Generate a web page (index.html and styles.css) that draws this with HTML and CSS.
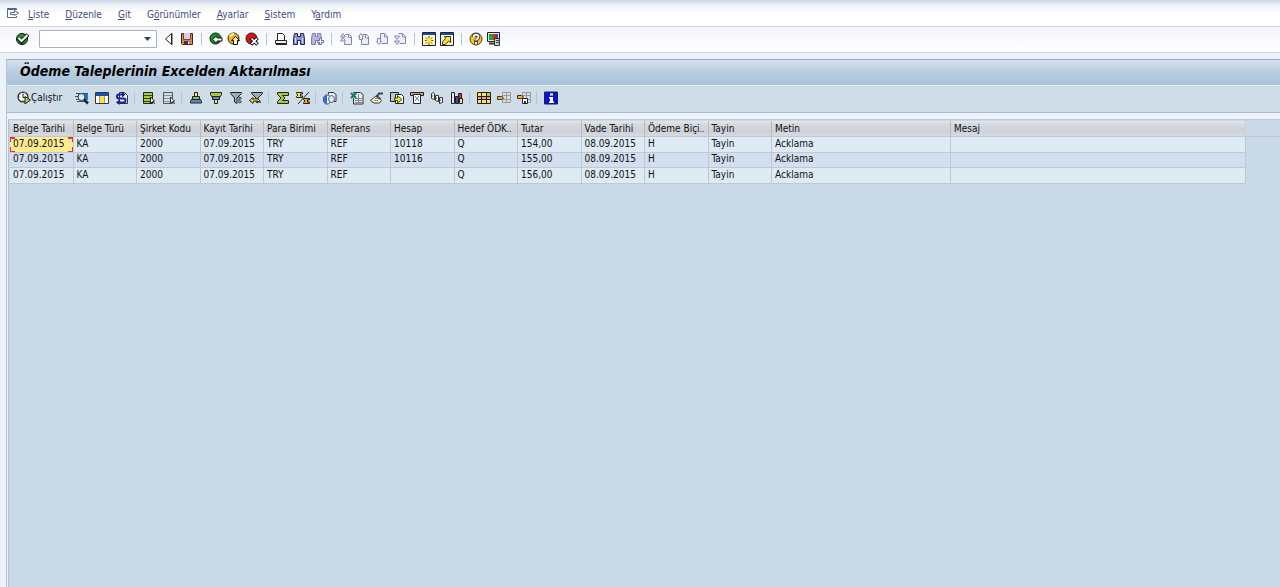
FILE: index.html
```html
<!DOCTYPE html>
<html lang="tr">
<head>
<meta charset="utf-8">
<title>Ödeme Taleplerinin Excelden Aktarılması</title>
<link rel="stylesheet" href="styles.css">
</head>
<body>
<nav class="menu">
  <button class="icon" aria-label="Menü"><svg viewBox="0 0 14 14" fill="none" stroke="#596491"><path d="M10.500 4V2.500h-9v9h9V10M1 3.500h10"/><path d="M4.500 6.500h4v-2l4 2.500-4 2.500v-1h-4z" fill="#fff"/></svg></button>
  <a href="#"><u>L</u>iste</a>
  <a href="#"><u>D</u>üzenle</a>
  <a href="#"><u>G</u>it</a>
  <a href="#">G<u>ö</u>rünümler</a>
  <a href="#"><u>A</u>yarlar</a>
  <a href="#"><u>S</u>istem</a>
  <a href="#">Y<u>a</u>rdım</a>
</nav>

<div class="toolbar">
  <button class="icon" aria-label="Giriş"><svg viewBox="0 0 14 14"><circle cx="7" cy="7" r="5.500" fill="#159c22" stroke="#111"/><path d="M3.500 6l3 3.500L13 2.500" fill="none" stroke="#111" stroke-width="4"/><path d="M3.500 6l3 3L12.500 3" fill="none" stroke="#fff" stroke-width="2"/></svg></button>
  <div class="command">
    <input type="text" aria-label="Komut alanı">
    <button class="drop" aria-label="Komut listesi"><svg viewBox="0 0 7 4"><path d="M0 0h7L3.500 4z" fill="#2b3f70"/></svg></button>
  </div>
  <div class="group">
    <button class="icon" aria-label="Önceki"><svg viewBox="0 0 14 14"><path d="M3.500 7l6-5.500v11z" fill="#fff" stroke="#222"/><path d="M10.500 1v12" stroke="#999"/></svg></button>
    <button class="icon" aria-label="Kaydet"><svg viewBox="0 0 14 14"><path d="M1.500 1.500h11v11h-10l-1-1z" fill="#d98b35" stroke="#3a2520"/><path d="M4 1h6v6H4z" fill="#dccbf0"/><path d="M3.500 1v6.500h7V1" fill="none" stroke="#6a4a3e"/><path d="M4 9h6v3.500H4z" fill="#453154"/><path d="M8 9.500h1.500V12H8z" fill="#fff"/></svg></button>
  </div>
  <div class="group split">
    <button class="icon" aria-label="Geri"><svg viewBox="0 0 14 14"><circle cx="6.500" cy="6.500" r="5.500" fill="#0b9a20" stroke="#111"/><path d="M3.500 7.500l4.500-4V6h5v3H8v2.500z" fill="#fff" stroke="#111"/></svg></button>
    <button class="icon" aria-label="Çık"><svg viewBox="0 0 14 14"><circle cx="6.500" cy="6.500" r="5.500" fill="#f2b500" stroke="#222"/><path d="M3 5a4 4 0 0 1 4-3" stroke="#fff79a" stroke-width="2" fill="none"/><path d="M8.500 4.500l4 4h-2v4h-4v-4h-2z" fill="#fff2a8" stroke="#111"/></svg></button>
    <button class="icon" aria-label="İptal"><svg viewBox="0 0 14 14"><circle cx="6.500" cy="6.500" r="5.500" fill="#dc1010" stroke="#211"/><path d="M6 6l6.500 6.500M12.500 6L6 12.500" stroke="#111" stroke-width="3.500"/><path d="M6.500 6.500l5.500 5.500M12 6.500L6.500 12" stroke="#fff" stroke-width="1.600"/></svg></button>
  </div>
  <div class="group split">
    <button class="icon" aria-label="Yazdır"><svg viewBox="0 0 14 14"><path d="M3.500 8.500v-7h5l2 2v5" fill="#fff" stroke="#222"/><path d="M1.500 8.500h11v3h-11z" fill="#eee" stroke="#222"/><path d="M2 12.500h11" stroke="#222"/></svg></button>
    <button class="icon" aria-label="Bul"><svg viewBox="0 0 14 14"><path d="M2.500 1.500h3v3h3v-3h3l1 5v6h-4v-4h-3v4h-4v-6z" fill="#8791d4" stroke="#222752"/><path d="M3.500 6v5M10.500 6v5" stroke="#d5daf8"/></svg></button>
    <button class="icon" aria-label="Sonrakini bul"><svg viewBox="0 0 14 14"><path d="M2.500 1.500h3v3h2v-3h3l1 5v6h-3v-4h-3v4h-4v-6z" fill="#b4b8e0" stroke="#7b7ea6"/><path d="M10.500 6v7M7 9.500h7" stroke="#7779a4" stroke-width="3"/><path d="M10.500 7v5M8 9.500h5" stroke="#f3f3ff"/></svg></button>
  </div>
  <div class="group split muted">
    <button class="icon" aria-label="İlk sayfa"><svg viewBox="0 0 14 14"><path d="M6.500 2.500h4l2 2v8h-7V10M9.500 3v2.500H12"/><path d="M1.500 5L4 1.500 6.500 5zM1.500 9L4 5.500 6.500 9z"/></svg></button>
    <button class="icon" aria-label="Önceki sayfa"><svg viewBox="0 0 14 14"><path d="M5.500 2.500h4l2 2v8h-7V6M8.500 3v3h3"/><path d="M1.500 4.500l2.500-3 2.500 3h-1v3h-3v-3z"/></svg></button>
    <button class="icon" aria-label="Sonraki sayfa"><svg viewBox="0 0 14 14"><path d="M5.500 7V1.500h4l3 3v7h-6M9.500 2v3h3"/><path d="M2.500 6.500h3v3h1l-2.500 3-2.500-3h1z"/></svg></button>
    <button class="icon" aria-label="Son sayfa"><svg viewBox="0 0 14 14"><path d="M5.500 1.500h4l3 3v7h-6M9.500 2v3h3"/><path d="M1.500 4L4 7.500 6.500 4zM1.500 9L4 12.500 6.500 9z"/></svg></button>
  </div>
  <div class="group split">
    <button class="icon" aria-label="Yeni oturum"><svg viewBox="0 0 14 14"><path d="M.5.5h13v13H.5z" fill="#f8f5ce" stroke="#222"/><path d="M1 1h12v2H1z" fill="#1a48a6"/><path d="M7 4v9M3 8.500h8M4 5.500l6 6M10 5.500l-6 6" stroke="#554800"/><circle cx="7" cy="8.500" r="2.500" fill="#ffe91f"/></svg></button>
    <button class="icon" aria-label="Kısayol"><svg viewBox="0 0 14 14"><path d="M.5.5h13v13H.5z" fill="#f5f4dd" stroke="#222"/><path d="M1 1h12v2H1z" fill="#1a48a6"/><path d="M2.500 12.500V10l3-3.500L4.500 4.500h6v6l-2-1.500-3 3.500z" fill="#ffe424" stroke="#333"/></svg></button>
  </div>
  <div class="group split">
    <button class="icon" aria-label="Yardım"><svg viewBox="0 0 14 14"><circle cx="7" cy="7" r="6" fill="#f5c51c" stroke="#493d21"/><path d="M4.500 5c0-3 5-3 5 0 0 2-2.500 2-2.500 4v3" stroke="#333" stroke-width="3.500" fill="none"/><path d="M4.500 5c0-3 5-3 5 0 0 2-2.500 2-2.500 3.500M7 10v2" stroke="#fff" stroke-width="1.800" fill="none"/></svg></button>
    <button class="icon" aria-label="Düzeni özelleştir"><svg viewBox="0 0 14 14"><path d="M.5.5h12v9H.5z" fill="#e8e8e8" stroke="#222"/><path d="M2 2h4v6H2z" fill="#08b22d"/><path d="M6 2h3v6H6z" fill="#e42121"/><path d="M9 2h2v4H9z" fill="#2c48d5"/><path d="M2 11.500h5" stroke="#333" stroke-width="2"/><path d="M7.500 6.500h5v7h-5z" fill="#ccc" stroke="#333"/><path d="M9 8.500h3M9 10.500h3" stroke="#444"/></svg></button>
  </div>
</div>

<main class="screen">
  <h1>Ödeme Taleplerinin Excelden Aktarılması</h1>
  <div class="actions">
    <button class="run"><svg viewBox="0 0 14 14"><circle cx="6" cy="6" r="5" fill="#f5f8ee" stroke="#222" stroke-width="1.200"/><path d="M6 3v3.500h2.500M6 1v1.500M2.500 6H1M6 9.500V11" stroke="#222" fill="none"/><path d="M8 5.500L13.500 9 8 13z" fill="#a5cf4e" stroke="#222"/></svg>Çalıştır</button>
    <div class="group">
      <button class="icon" aria-label="Ayrıntılar"><svg viewBox="0 0 14 14"><path d="M1 2.500h12M0 5.500h4M1 8.500h4M2 10.500h8" stroke="#344f79"/><path d="M8 3h5v6H8z" fill="#1779cf"/><circle cx="6.500" cy="6" r="3.500" fill="#d5f0ff" stroke="#27344a"/><path d="M9 8.500l4 4" stroke="#222" stroke-width="2.500"/></svg></button>
      <button class="icon" aria-label="Sütunlar"><svg viewBox="0 0 14 14"><path d="M.5 1.500h13v11H.5z" fill="#fff" stroke="#333"/><path d="M1 2h12v3H1z" fill="#1750b4"/><path d="M5 5h4v7H5z" fill="#ffe32e"/><path d="M4.500 5v7M9.500 5v7" stroke="#8e9bb1"/></svg></button>
      <button class="icon" aria-label="Yenile"><svg viewBox="0 0 14 14"><path d="M4.500 1.500h5l3 3v8h-8z" fill="#eef1f8" stroke="#333"/><path d="M9 3.500H4a2 2 0 0 0 0 4h4.500a2 2 0 0 1 0 4H4" stroke="#12219b" stroke-width="2" fill="none"/><path d="M7 .5l3.500 3L7 6.500zM4.500 8.500L1 11.500l3.500 2.500z" fill="#12219b"/></svg></button>
    </div>
    <div class="group split">
      <button class="icon" aria-label="Tümünü seç"><svg viewBox="0 0 14 14"><path d="M1.500 1.500h9v11h-9z" fill="#a9cc3a" stroke="#222"/><path d="M2 4.500h8M2 7.500h8M2 10.500h8" stroke="#34451a"/><path d="M8.500 6v6l4-2z" fill="#fff" stroke="#222"/><path d="M11 10l1.500 3" stroke="#222"/></svg></button>
      <button class="icon" aria-label="Seçimi kaldır"><svg viewBox="0 0 14 14"><path d="M1.500 1.500h9v11h-9z" fill="#cfdde8" stroke="#555"/><path d="M2 4.500h8M2 7.500h8M2 10.500h8" stroke="#8298a5"/><path d="M8.500 6v6l4-2z" fill="#fff" stroke="#333"/><path d="M11 10l1.500 3" stroke="#222"/></svg></button>
    </div>
    <div class="group split">
      <button class="icon" aria-label="Artan sırala"><svg viewBox="0 0 14 14"><path d="M5.500 1.500h3v4h-3z" fill="#ffe578" stroke="#222"/><path d="M3.500 5.500h7v3h-7z" fill="#8fb660" stroke="#222"/><path d="M2.500 8.500h9l1 2v1.500h-11v-1.500z" fill="#5688bd" stroke="#222"/></svg></button>
      <button class="icon" aria-label="Azalan sırala"><svg viewBox="0 0 14 14"><path d="M1.500 1.500h11v2l-1 2h-9l-1-2z" fill="#a7ca3f" stroke="#222"/><path d="M3.500 5.500h7v3h-7z" fill="#5b8aae" stroke="#222"/><path d="M5.500 8.500h3v4h-3z" fill="#ffe578" stroke="#222"/></svg></button>
      <button class="icon" aria-label="Filtre"><svg viewBox="0 0 14 14"><path d="M1.500 1.500h11v1L8 7v5.500L5.500 11V7l-4-4.500z" fill="#9aacba" stroke="#222"/><path d="M10 6l2.500 1-2 2 2 2-2.500 1z" fill="#fff" stroke="#333"/></svg></button>
      <button class="icon" aria-label="Filtreyi sil"><svg viewBox="0 0 14 14"><path d="M2.500 1.500h11v1L9 7v5L7 11V7L2.500 2.500z" fill="#9aacba" stroke="#222"/><path d="M.5 9.500l3.500-3v2c2-1 6-2 7.500 3-2-1.500-5-2-7.500-1v2z" fill="#ffdc2b" stroke="#222"/></svg></button>
    </div>
    <div class="group split">
      <button class="icon" aria-label="Toplam"><svg viewBox="0 0 14 14"><path d="M1.500 1.500h11v3H6.500L9 7 6.500 9.500h6v3h-11v-2L5 7 1.500 3.500z" fill="#a6c837" stroke="#222"/></svg></button>
      <button class="icon" aria-label="Alt toplam"><svg viewBox="0 0 14 14"><path d="M.5 1.500h6V3H4l1 1-1 1h2.500v1.500h-6v-1L2 4 .5 2.500z" fill="#ffe52b" stroke="#222"/><path d="M7.500 7.500h6V9H11l1 1-1 1h2.500v1.500h-6v-1L9 10 7.500 8.500z" fill="#ff9b2b" stroke="#222"/><path d="M13 1L2 13" stroke="#222"/></svg></button>
    </div>
    <div class="group split">
      <button class="icon" aria-label="Baskı önizleme"><svg viewBox="0 0 14 14"><path d="M5.500 3.500v-2h5l2.500 2v7h-4" fill="#eef3f8" stroke="#333"/><ellipse cx="4" cy="8.500" rx="3.500" ry="4.500" fill="#fff" stroke="#163c91"/><path d="M4 4.500v8a3 4 0 0 1 0-8" fill="#2c62d8"/><ellipse cx="8.500" cy="8" rx="3" ry="3.500" fill="#d8e6f5" stroke="#536780"/></svg></button>
    </div>
    <div class="group split">
      <button class="icon" aria-label="Tablolama"><svg viewBox="0 0 14 14"><path d="M3.500 1.500h7l2.500 2v9.500h-9.500z" fill="#f0f0ed" stroke="#333"/><path d="M5 7.500h7M5 9.500h7M5 11.500h7M8.500 3v9" stroke="#81858c"/><path d="M0 2h7v5H0z" fill="#cde8e6"/><path d="M1 2l5 5M6 2L1 7" stroke="#067870" stroke-width="2"/></svg></button>
      <button class="icon" aria-label="Kelime işlem"><svg viewBox="0 0 14 14"><path d="M.5 9.500l6-5 5 5-2 2.500H4z" fill="#fff6c4" stroke="#333"/><path d="M13 2.500H9L7 5.500 10.500 8" stroke="#33485c" stroke-width="2" fill="none"/><path d="M5 7.500h3M4 9.500h4" stroke="#8290a0"/></svg></button>
      <button class="icon" aria-label="Yerel dosya"><svg viewBox="0 0 14 14"><path d="M.5 1.500h8v9h-8z" fill="#b9c9d4" stroke="#222"/><path d="M5.500 3.500h6l2 2v7h-8z" fill="#fff" stroke="#222"/><path d="M4.500 7h3V4.500L12 8.500 7.500 12V9.500h-3z" fill="#e5ea25" stroke="#354d11"/></svg></button>
      <button class="icon" aria-label="Posta"><svg viewBox="0 0 14 14"><path d="M.5 1.500h13v3H.5z" fill="#c9a27d" stroke="#222"/><path d="M3.500 3.500h7v9h-7z" fill="#fff" stroke="#222"/><path d="M5 5l4 5M9 5l-4 5" stroke="#69778b"/></svg></button>
      <button class="icon" aria-label="ABC analizi"><svg viewBox="0 0 14 14"><path d="M1.500 2.500l2-1 1 1v6l-3-1zM5.500 4.500h3v6l-3-1zM9.500 6.500h3v5l-3 1z" fill="#fff" stroke="#333"/><path d="M2.500 4v2M6.500 6v2M10.500 8v2" stroke="#b1a340"/></svg></button>
      <button class="icon" aria-label="Grafik"><svg viewBox="0 0 14 14"><path d="M1.500 1.500h3v11h-3z" fill="#dfe6ec" stroke="#222"/><path d="M5.500 5.500h3v7h-3z" fill="#2455b5" stroke="#222"/><path d="M8.500 2.500h3v5h-3z" fill="#df2d20" stroke="#222"/><path d="M9.500 7.500h3v5h-3z" fill="#ffe884" stroke="#222"/></svg></button>
    </div>
    <div class="group split">
      <button class="icon" aria-label="Düzeni değiştir"><svg viewBox="0 0 14 14"><path d="M.5 1.500h13v11H.5z" fill="#ffe35c"/><path d="M1 5h12v3H1z" fill="#f2a27b"/><path d="M10 2h3v3h-3z" fill="#a9cc5c"/><path d="M.5 1.500h13v11H.5zM1 5.500h12M1 8.500h12M4.500 2v10M9.500 2v10" fill="none" stroke="#222"/></svg></button>
      <button class="icon" aria-label="Düzen seç"><svg viewBox="0 0 14 14"><path d="M5.500 1.500h8v10h-8zM6 4.500h7M6 8.500h7M9.500 2v9" fill="#ddd" stroke="#999"/><path d="M.5 5.500h4l2 1.500-2 1.500h-4z" fill="#f5b620" stroke="#333"/></svg></button>
      <button class="icon" aria-label="Düzeni kaydet"><svg viewBox="0 0 14 14"><path d="M5.500 1.500h8v10h-8zM6 4.500h7M6 8.500h7M9.500 2v9" fill="#ddd" stroke="#999"/><path d="M.5 4.500h4l2 1.500-2 1.500h-4z" fill="#f5b620" stroke="#333"/><path d="M5.500 7.500h5v5h-5z" fill="#fff" stroke="#222"/><path d="M7 10h2v2H7z" fill="#333"/></svg></button>
    </div>
    <div class="group split">
      <button class="icon" aria-label="Bilgi"><svg viewBox="0 0 14 14"><path d="M.5 1h13v12H.5z" fill="#0712dc" stroke="#1a2445"/><path d="M6 2.500h3v2H6zM5 6h4v4.500h1V12H5v-1.500h1v-3H5z" fill="#fff"/></svg></button>
    </div>
  </div>
  <div class="content">
    <table>
      <colgroup><col span="12"><col class="metin"><col class="mesaj"></colgroup>
      <thead><tr><th>Belge Tarihi</th><th>Belge Türü</th><th>Şirket Kodu</th><th>Kayıt Tarihi</th><th>Para Birimi</th><th>Referans</th><th>Hesap</th><th>Hedef ÖDK<small>..</small></th><th>Tutar</th><th>Vade Tarihi</th><th>Ödeme Biçi<small>..</small></th><th>Tayin</th><th>Metin</th><th>Mesaj</th></tr></thead>
      <tbody>
        <tr><td class="selected">07.09.2015</td><td>KA</td><td>2000</td><td>07.09.2015</td><td>TRY</td><td>REF</td><td>10118</td><td>Q</td><td>154,00</td><td>08.09.2015</td><td>H</td><td>Tayin</td><td>Acklama</td><td></td></tr>
        <tr><td>07.09.2015</td><td>KA</td><td>2000</td><td>07.09.2015</td><td>TRY</td><td>REF</td><td>10116</td><td>Q</td><td>155,00</td><td>08.09.2015</td><td>H</td><td>Tayin</td><td>Acklama</td><td></td></tr>
        <tr><td>07.09.2015</td><td>KA</td><td>2000</td><td>07.09.2015</td><td>TRY</td><td>REF</td><td></td><td>Q</td><td>156,00</td><td>08.09.2015</td><td>H</td><td>Tayin</td><td>Acklama</td><td></td></tr>
      </tbody>
    </table>
  </div>
</main>
</body>
</html>
```
FILE: styles.css
```css
* { box-sizing: border-box; }
body {
  margin: 0;
  min-height: 100vh;
  display: flex;
  flex-direction: column;
  background: #edf1f8;
  font: 10px/14px "DejaVu Sans Condensed", "DejaVu Sans", sans-serif;
  color: #111;
}
button, input { font: inherit; color: inherit; border: 0; padding: 0; margin: 0; background: none; }
svg { display: block; }
.icon, .icon svg { width: 14px; height: 14px; flex: none; }

.menu {
  display: flex;
  align-items: center;
  gap: 16px;
  height: 27px;
  padding: 3px 6px 0;
  border-bottom: 1px solid #cfd5e3;
  background: linear-gradient(#ccd7e7, #eef2f8 5px, #fff 14px);
}
.menu .icon { margin: 0 -8px 4px 0; }
.menu a { color: #3f4d7e; text-decoration: none; }

.toolbar {
  display: flex;
  align-items: center;
  height: 26px;
  padding: 0 15px 2px;
  border-bottom: 1px solid #cdd6e6;
  background: linear-gradient(#f3f5fa, #fff);
}
.command {
  display: flex;
  align-items: center;
  width: 118px;
  height: 18px;
  margin: 0 5px 0 10px;
  border: 1px solid #aab0b8;
  border-radius: 1px;
  background: #fff;
}
.command input { flex: 1; min-width: 0; height: 16px; outline: 0; }
.drop { padding: 5px; }
.drop svg { width: 7px; height: 4px; }
.group { display: flex; gap: 4px; }
.split { position: relative; margin-left: 15px; }
.split::before {
  content: "";
  position: absolute;
  left: -8px;
  top: 1px;
  width: 1px;
  height: 12px;
  background: #afc6df;
}
.muted svg { fill: #eeeefa; stroke: #8584ad; }

.screen {
  flex: 1;
  display: flex;
  flex-direction: column;
  margin: 6px 0 0 6px;
  border-top: 1px solid #98a9bf;
  border-left: 1px solid #b5c3d7;
}
h1 {
  margin: 0;
  height: 26px;
  padding: 0 13px;
  border-bottom: 1px solid #e1eaf2;
  background: linear-gradient(#d2e0ed, #b6cbdc 55%, #a9c3de);
  font-size: 14px;
  font-style: italic;
  line-height: 22px;
  color: #000;
}
.actions {
  display: flex;
  align-items: center;
  height: 27px;
  padding: 0 10px 2px;
  border-bottom: 1px solid #a9bdd4;
  background: #cfdde8;
}
.actions .group { gap: 6px; }
.actions .split { margin-left: 13px; }
.run { display: flex; align-items: center; width: 58px; white-space: nowrap; }
.run svg { width: 14px; height: 14px; flex: none; }

.content {
  flex: 1;
  margin: 6px 0 0 1px;
  padding: 1px 0 0 1px;
  border-top: 1px solid #bdcbdb;
  border-left: 1px solid #b3c0cf;
  background: linear-gradient(#bcc9d7, #bcc9d7) 0 16px / 100% 1px no-repeat, #cad9e8;
}
table {
  table-layout: fixed;
  width: calc(100% - 34px);
  border-spacing: 0;
  line-height: 12px;
}
.metin { width: 179px; }
.mesaj { width: 295px; }
th, td {
  height: 16px;
  padding: 0 0 2px 3px;
  overflow: hidden;
  white-space: nowrap;
  text-align: left;
  font-weight: normal;
  border-right: 1px solid #bdc8d6;
  border-bottom: 1px solid #bdc9d6;
}
tbody tr:nth-child(even) td { height: 15px; background: #d3dfef; }
th {
  padding: 1px 0 0 3px;
  border-right-color: #b5bac4;
  background: linear-gradient(#e4e8eb, #d7dade 3px, #cdd1d9 10px, #d6dae0);
}
th:last-child { border-right-color: #cdd1d9; }
th small { font-size: 8px; line-height: 10px; }
td { background: #deebf5; }
.selected {
  background:
    linear-gradient(#e0343c, #e0343c) 0 0 / 5px 2px,
    linear-gradient(#e0343c, #e0343c) 0 0 / 1px 5px,
    linear-gradient(#e0343c, #e0343c) 100% 0 / 5px 2px,
    linear-gradient(#e0343c, #e0343c) 100% 0 / 1px 5px,
    linear-gradient(#e0343c, #e0343c) 0 100% / 5px 1px,
    linear-gradient(#e0343c, #e0343c) 0 100% / 1px 5px,
    linear-gradient(#e0343c, #e0343c) 100% 100% / 5px 1px,
    linear-gradient(#e0343c, #e0343c) 100% 100% / 1px 5px,
    #ffec91;
  background-repeat: no-repeat;
  background-origin: padding-box;
  background-clip: padding-box;
}
```
